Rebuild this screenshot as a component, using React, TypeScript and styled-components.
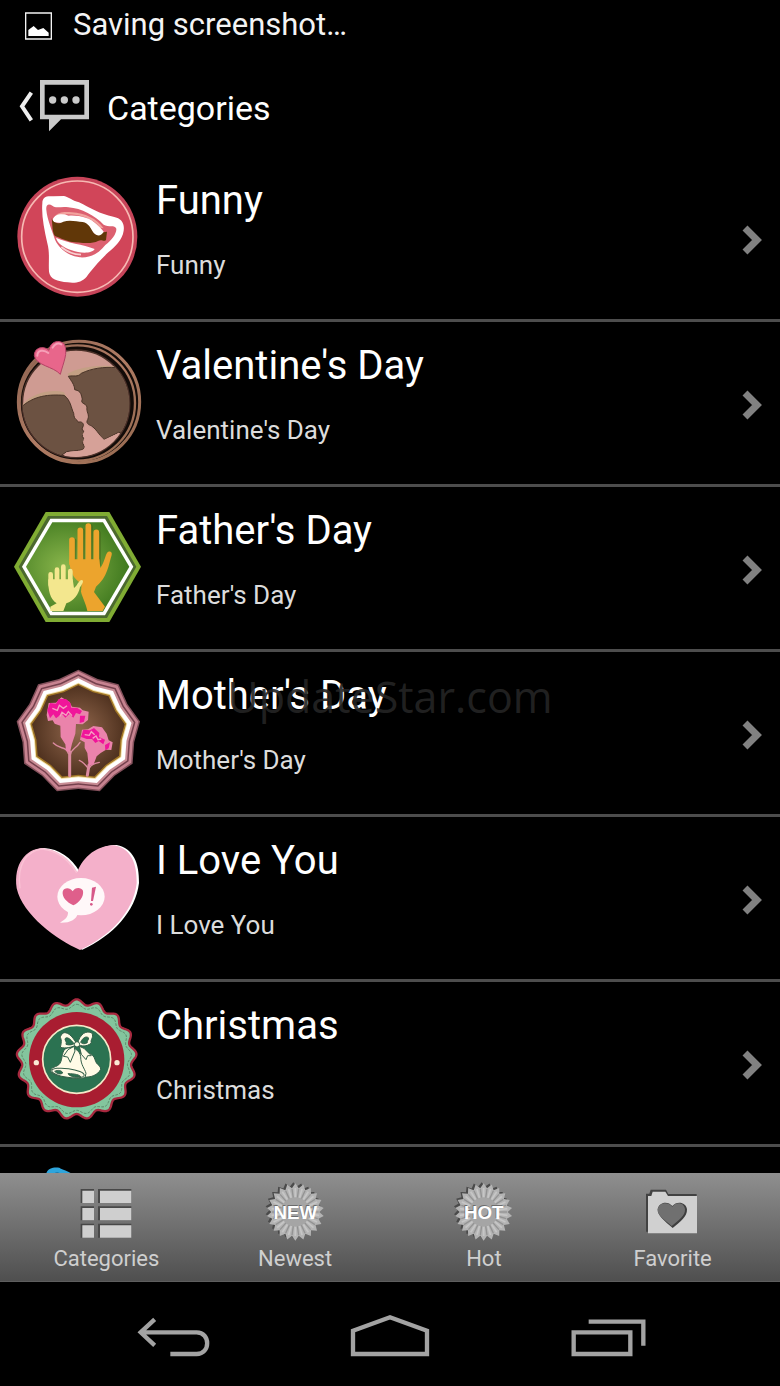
import React from 'react';
import styled, { createGlobalStyle } from 'styled-components';

const GlobalStyle = createGlobalStyle`
  *, *::before, *::after { box-sizing: border-box; }
  body { margin: 0; background: #000; }
  button { font: inherit; color: inherit; background: none; border: 0; padding: 0; cursor: pointer; }
  h1, h2, p, ul { margin: 0; padding: 0; font-weight: 400; }
  ul { list-style: none; }
  svg { display: block; flex: none; }
`;

const Screen = styled.div`
  position: relative;
  display: flex;
  flex-direction: column;
  height: 100vh;
  overflow: hidden;
  background: #000;
  color: #fff;
  font-family: Roboto, 'Liberation Sans', sans-serif;
`;

const StatusBar = styled.div`
  display: flex;
  flex: none;
  align-items: center;
  gap: 17px;
  height: 50px;
  padding: 0 24px;
  font-size: 31px;
  line-height: 40px;
  color: #f4f4f4;
`;

const ActionBar = styled.header`
  display: flex;
  flex: none;
  align-items: center;
  gap: 17px;
  height: 107px;
  padding: 8px 18px 0;
`;

const ScreenTitle = styled.h1`
  font-size: 34px;
  line-height: 44px;
`;

const CategoryList = styled.ul`
  flex: 1;
  min-height: 0;
  overflow: hidden;
`;

const CategoryRow = styled.li`
  height: 165px;
  border-bottom: 3px solid #4d4d4d;
`;

const CategoryLink = styled.a`
  display: flex;
  align-items: center;
  height: 100%;
  padding: 0 16px 0 12px;
  color: inherit;
  text-decoration: none;
`;

const CategoryText = styled.div`
  display: flex;
  flex: 1;
  flex-direction: column;
  align-self: flex-start;
  gap: 24px;
  min-width: 0;
  padding: 20px 0 0 12px;
`;

const CategoryName = styled.h2`
  font-size: 40px;
  line-height: 48px;
`;

const CategoryNote = styled.p`
  font-size: 26px;
  line-height: 32px;
  color: #dcdcdc;
`;

const TabBar = styled.nav`
  display: grid;
  flex: none;
  grid-template-columns: repeat(4, 1fr);
  padding: 0 13px 0 12px;
  background: linear-gradient(#8f8f8f, #4f4f4f);
  border-bottom: 1px solid #5e5e5e;
`;

const Tab = styled.button`
  display: flex;
  flex-direction: column;
  align-items: center;
  padding: 8px 0;
  font-size: 22px;
  line-height: 28px;
  color: #cfcfcf;
`;

const SystemBar = styled.nav`
  display: grid;
  flex: none;
  grid-template-columns: repeat(3, 1fr);
  height: 104px;
  padding: 0 64px;
`;

const SystemButton = styled.button`
  display: flex;
  align-items: center;
  justify-content: center;
`;

const Watermark = styled.div`
  position: absolute;
  inset: 0;
  display: flex;
  align-items: center;
  justify-content: center;
  padding-top: 8px;
  font-family: 'Open Sans', 'Noto Sans', sans-serif;
  font-size: 43px;
  line-height: 60px;
  color: rgba(36, 36, 36, 0.92);
  pointer-events: none;
`;

/* Radial outline with n tips, alternating between two radii. */
const starPoints = (cx: number, cy: number, outer: number, inner: number, n: number) =>
  Array.from({ length: n * 2 }, (_, i) => {
    const a = (Math.PI * i) / n - Math.PI / 2;
    const r = i % 2 ? inner : outer;
    return `${(cx + r * Math.cos(a)).toFixed(1)},${(cy + r * Math.sin(a)).toFixed(1)}`;
  }).join(' ');

/* Smooth scalloped ring with n bumps. */
const wavePoints = (cx: number, cy: number, r: number, depth: number, n: number) =>
  Array.from({ length: 360 }, (_, i) => {
    const t = (Math.PI * i) / 180;
    const d = r + depth * Math.cos(n * t);
    return `${(cx + d * Math.sin(t)).toFixed(1)},${(cy - d * Math.cos(t)).toFixed(1)}`;
  }).join(' ');

type ArtProps = { viewBox?: string; children: React.ReactNode };
const Art = ({ viewBox = '36 36 396 396', children }: ArtProps) => (
  <svg width="132" height="132" viewBox={viewBox} aria-hidden="true">{children}</svg>
);

const FunnyArt = () => (
  <Art viewBox="36 21 396 396">
    <circle cx="232" cy="215" r="180" fill="#c74459" />
    <circle cx="232" cy="215" r="167" fill="#d14559" stroke="#f7b9b3" strokeWidth="5" />
    <path fill="#fff" d="M127 115C127 95 140 92 160 94L192 93C207 96 215 106 237 112C270 128 300 148 340 155C366 160 374 176 371 197C367 225 345 245 325 262C300 285 272 318 260 335C246 352 225 355 203 352C172 348 150 343 147 320C145 290 150 265 142 235C132 190 124 150 127 115Z" />
    <path fill="#dc6070" d="M139 135C137 117 147 115 157 122C168 132 184 123 205 127C245 130 285 152 311 179C325 188 345 178 349 191C350 206 335 225 316 240C298 264 272 279 240 277C208 273 177 252 165 224C154 190 142 165 139 135Z" />
    <path fill="#f2a39e" d="M163 158C172 140 195 140 215 142C255 145 290 160 311 190L300 188C280 160 240 148 200 148Z" />
    <path fill="#fff" d="M158 164C164 148 184 144 206 152C238 150 270 158 290 178C302 190 318 202 312 212C300 220 285 212 270 192C240 172 210 176 160 172Z" />
    <path fill="#613708" d="M155 160C161 176 174 178 190 170C207 164 230 169 248 171C266 174 272 190 281 204C290 214 304 214 310 202L321 200L318 225C311 232 306 222 294 228C276 238 240 233 211 230C193 224 174 217 164 212C156 200 158 180 155 160Z" />
    <path fill="#fff" d="M168 218C200 234 250 238 284 252C275 267 240 265 215 256C190 247 172 235 168 218Z" />
    <path fill="none" stroke="#f8cfd0" strokeWidth="5" d="M184 246Q210 268 243 269" />
  </Art>
);

const ValentineArt = () => (
  <Art>
    <defs>
      <clipPath id="coin"><circle cx="228" cy="236" r="160" /></clipPath>
      <linearGradient id="rim" x1="0" y1="0" x2="1" y2="1">
        <stop offset="0" stopColor="#8c6250" /><stop offset=".5" stopColor="#b07c64" /><stop offset="1" stopColor="#93684e" />
      </linearGradient>
    </defs>
    <circle cx="237" cy="231" r="182" fill="#120b08" stroke="url(#rim)" strokeWidth="9" />
    <circle cx="232" cy="234" r="173" fill="none" stroke="url(#rim)" strokeWidth="7" />
    <circle cx="228" cy="236" r="161" fill="#cf9b92" stroke="#4a3028" strokeWidth="5" />
    <g clipPath="url(#coin)">
      <path fill="#c3a084" d="M202 146C240 126 300 117 350 125L345 150L210 160ZM66 240C100 200 160 192 192 202L200 216L70 250Z" />
      <path fill="#6c5242" stroke="#493428" strokeWidth="3" d="M205 154C222 150 232 158 244 145C275 130 310 125 350 128L410 180L400 330L356 322L312 344C300 336 295 318 275 303C264 298 257 294 263 284C270 268 258 262 261 246C256 232 240 238 247 222C243 212 246 198 224 194C224 180 214 168 205 154Z" />
      <path fill="#6c5242" stroke="#493428" strokeWidth="3" d="M60 250C100 210 150 208 192 211C212 225 213 248 221 265C222 286 232 282 235 292C242 288 252 294 250 302L246 312L253 322L247 334L254 344L248 354L254 366C250 380 228 374 200 380L180 394L120 400L50 340Z" />
      <path fill="#d6a198" d="M255 296L286 318L312 344L356 324L378 332C340 380 290 400 190 396L200 382C235 376 254 382 254 364L249 350L253 340L248 328L254 318Z" />
    </g>
    <path fill="#e8668b" stroke="#b34365" strokeWidth="3" d="M181 148C160 124 108 122 103 92C102 68 130 60 147 76C150 48 180 42 193 58C205 84 190 112 181 148Z" />
    <path fill="none" stroke="#f6a0b8" strokeWidth="6" strokeLinecap="round" d="M112 92C112 76 130 72 145 84M158 68C164 56 176 52 184 58" />
  </Art>
);

const FatherArt = () => (
  <Art>
    <defs>
      <radialGradient id="leaf" cx=".38" cy=".5" r=".6">
        <stop offset="0" stopColor="#8ab64c" /><stop offset="1" stopColor="#427b20" />
      </radialGradient>
    </defs>
    <path fill="#80ac33" d="M42 230L137 66H328L423 230L328 396H137Z" />
    <path fill="#4b692e" d="M56 230L144 78H321L409 230L321 384H144Z" />
    <path fill="#fff" d="M66 230L151 86H315L400 230L315 376H151Z" />
    <path fill="url(#leaf)" d="M78 230L157 97H309L388 230L309 365H157Z" />
    <g fill="#44661c" stroke="#44661c" opacity=".6" transform="translate(5 3)">
      <path d="M216 220V150M241 220V121M265 220V108M289 220V127" strokeWidth="17" strokeLinecap="round" />
    </g>
    <path d="M216 220V150M241 220V121M265 220V108M289 220V127" stroke="#eca42d" strokeWidth="17" strokeLinecap="round" />
    <path fill="#eca42d" d="M208 208L298 208L301 234C314 215 315 198 321 189C327 181 338 184 335 195C326 225 322 262 288 290L282 306L315 350L308 363H262C258 340 246 320 243 305L245 280C220 270 208 240 208 208Z" />
    <path d="M152 285V253M171 285V239M190 285V230M211 285V243" stroke="#f3e78e" strokeWidth="14" strokeLinecap="round" />
    <path fill="#f3e78e" d="M145 268L218 268L222 294C232 288 235 271 246 270C254 274 244 285 240 292C236 312 222 334 199 340L190 363H151V350L170 340C150 328 144 300 145 268Z" />
  </Art>
);

const MotherArt = () => (
  <Art>
    <defs>
      <radialGradient id="cocoa"><stop offset="0" stopColor="#94694f" /><stop offset="1" stopColor="#50321f" /></radialGradient>
    </defs>
    {[[188, '#83505b'], [183, '#c78390'], [174, '#75404d'], [169, '#c88c94'], [162, '#fff'], [149, '#f2dfa4'], [146, '#a17625'], [141, 'url(#cocoa)']].map(([r, fill]) => (
      <polygon key={r} points={starPoints(235, 232, Number(r), Number(r) * 0.905, 9)} fill={String(fill)} />
    ))}
    <g fill="none" stroke="#dc8aa0" strokeLinecap="round">
      <path strokeWidth="9" d="M209 362V290M262 361L267 330" />
      <path strokeWidth="4" d="M160 264C180 285 198 272 205 296M240 262C228 282 214 280 211 300M238 316C252 322 256 330 263 338M298 322C282 326 274 328 267 340" />
    </g>
    <path fill="#ea83ab" d="M140 180L146 144L168 143L184 127L208 140L216 155L240 158L248 166L266 170L264 195L248 208L228 207L226 236L216 266L210 292L198 288L196 268L182 246L181 212L164 206L158 196L144 198Z" />
    <path fill="#f0159a" d="M142 166L150 144L168 146L176 132L198 132L212 145L213 158L232 159L246 168L240 178L228 174L220 188L208 177L196 188L186 176L168 190L160 178L150 190ZM240 182L256 182L252 200L239 204Z" />
    <path fill="none" stroke="#f5a0c0" strokeWidth="4" d="M157 160L172 166L178 151L190 160L201 152M180 184L186 172L198 181L205 170L216 182" />
    <path fill="#ea83ab" d="M240 254L246 224L264 223L280 213L306 217L320 236L326 256L338 262L334 285L318 284L302 294L290 304L281 328L266 332L262 294L254 279L254 262Z" />
    <path fill="#f0159a" d="M243 246L250 224L270 226L282 219L298 234L297 246L315 254L310 268L296 258L286 264L276 252L260 252L250 248ZM315 270L330 262L326 280L316 286Z" />
    <path fill="none" stroke="#f5a0c0" strokeWidth="4" d="M254 239L268 241L274 230L284 239M278 250L288 243L294 254L304 252" />
  </Art>
);

const heartOutline = 'M240 390C170 360 68 285 50 205C40 132 78 87 125 85C170 87 208 115 232 156C250 108 293 76 343 76C393 86 411 130 410 190C400 275 332 348 240 390Z';

const LoveArt = () => (
  <Art>
    <path fill="#fff" d={heartOutline} transform="translate(7 -1)" />
    <path fill="#f4b0ca" d={heartOutline} />
    <path fill="none" stroke="#fac3d5" strokeWidth="4" d="M60 205C50 132 80 94 125 87C170 90 204 118 230 158" />
    <ellipse cx="243" cy="230" rx="71" ry="56" fill="#fff8f9" />
    <path fill="#fff8f9" d="M202 268C209 288 197 298 180 308C210 309 230 299 234 278Z" />
    <path fill="#df5f8b" d="M220 256C200 246 186 232 188 215C192 202 210 202 218 214C224 202 243 200 249 212C252 230 238 247 220 256Z" />
    <path fill="#d75888" d="M276 203L288 200L279 243H273Z" />
    <circle cx="274" cy="253" r="4" fill="#d75888" />
  </Art>
);

const ChristmasArt = () => (
  <Art>
    <polygon points={wavePoints(230, 223, 172, 8, 17)} fill="#83c59d" stroke="#a8293f" strokeWidth="7" strokeLinejoin="round" />
    <polygon points={wavePoints(230, 223, 159, 6, 17)} fill="none" stroke="#5b8768" strokeWidth="3" strokeDasharray="8 4" />
    <circle cx="230" cy="224" r="143" fill="#a91d31" />
    <circle cx="230" cy="223" r="102" fill="#2b7251" stroke="#f6e9c9" strokeWidth="5" />
    <circle cx="109" cy="233" r="8" fill="#fbe9d5" />
    <circle cx="351" cy="233" r="8" fill="#fbe9d5" />
    <g fill="#fffbe6" stroke="#335f49" strokeWidth="3" strokeLinejoin="round">
      <path d="M240 205C260 198 280 205 285 224C290 242 302 240 302 253C294 270 272 278 252 276L235 250Z" />
      <path d="M195 192C215 180 240 195 242 215C242 240 254 250 258 265L255 278C225 284 170 276 153 262C148 245 172 248 180 235C188 222 184 205 195 192Z" />
      <ellipse cx="204" cy="264" rx="49" ry="13" transform="rotate(8 204 264)" />
      <path fill="#2b7251" d="M164 259C174 254 186 256 188 264C182 269 171 267 164 259ZM204 266C225 266 240 270 242 275C226 278 208 274 204 266Z" />
      <path d="M222 184L204 194L190 214L203 216L211 232L225 198ZM238 184L252 190L274 212L263 212L258 224L244 208Z" />
      <path d="M231 178C212 142 191 136 184 150C175 162 190 154 181 187C196 191 216 188 231 178ZM232 178C240 144 260 136 276 144C282 160 270 162 274 174C260 186 244 184 232 178Z" />
      <path fill="#2b7251" d="M222 176C210 160 202 156 196 160C192 167 202 168 198 178C206 181 216 180 222 176ZM242 172C248 158 258 153 265 158C268 164 260 166 262 173C254 178 248 177 242 172Z" />
      <circle cx="231" cy="178" r="8" />
    </g>
  </Art>
);

const NextArt = () => (
  <Art viewBox="36 531 396 396">
    <path fill="#2ea5dc" d="M138 572C138 550 160 545 178 548C188 556 200 554 220 570C250 600 255 680 230 730C190 770 140 730 120 680C112 640 120 600 138 572Z" />
    <path fill="#1b6f9f" d="M158 568Q172 556 184 568Z" />
  </Art>
);

const Chevron = () => (
  <svg width="24" height="36" viewBox="0 0 24 36" aria-hidden="true">
    <path d="M5 8L17 20L5 32" fill="none" stroke="#818181" strokeWidth="7" />
  </svg>
);

type BadgeProps = { label: string; viewBox: string; cx: number };
const Badge = ({ label, viewBox, cx }: BadgeProps) => (
  <svg width="64" height="64" viewBox={viewBox} aria-hidden="true">
    <polygon points={starPoints(cx - 6, 151, 84, 72, 22)} fill="#4a4a4a" />
    <polygon points={starPoints(cx, 156, 86, 72, 22)} fill="#b4b4b4" />
    {Array.from({ length: 22 }, (_, i) => (
      <path key={i} d={`M${cx} 116V86`} stroke="#939393" strokeWidth="4" transform={`rotate(${((i + 0.5) * 360) / 22} ${cx} 156)`} />
    ))}
    {Array.from({ length: 22 }, (_, i) => (
      <path key={i} d={`M${cx} 116V84`} stroke="#c6c6c6" strokeWidth="5" transform={`rotate(${(i * 360) / 22} ${cx} 156)`} />
    ))}
    <circle cx={cx} cy="156" r="44" fill="#a5a5a5" />
    <g fontFamily="Liberation Sans, Arial, sans-serif" fontSize="56" fontWeight="700" textAnchor="middle">
      <text x={cx - 2} y="174" fill="#6b6b6b">{label}</text>
      <text x={cx} y="178" fill="#fff">{label}</text>
    </g>
  </svg>
);

const GridIcon = () => (
  <svg width="64" height="64" viewBox="223 63 192 192" aria-hidden="true">
    {[91, 143, 195].map((y) => (
      <g key={y}>
        <path fill="#484848" d={`M243 ${y - 4}H283V${y + 38}H243ZM295 ${y - 4}H395V${y + 38}H295Z`} />
        <path fill="#cfcfcf" d={`M248 ${y + 1}H283V${y + 38}H248ZM301 ${y + 1}H395V${y + 38}H301Z`} />
      </g>
    ))}
  </svg>
);

const FolderIcon = () => (
  <svg width="64" height="64" viewBox="754 63 192 192" aria-hidden="true">
    <path fill="#424242" d="M769 215V101H779L783 89H829L836 102H921V215Z" />
    <path fill="#d0d0d0" d="M775 220V108H785L789 95H827L835 108H922V220Z" />
    <path fill="#3e3e3e" d="M849 204C826 184 803 168 804 148C808 125 835 122 848 138C861 122 889 125 892 148C893 170 872 186 849 204Z" />
    <path fill="#707070" d="M846 198C826 180 803 168 804 148C808 127 835 124 848 140C860 124 884 127 886 148C887 168 866 182 846 198Z" />
  </svg>
);

const categories = [
  { name: "Funny", art: <FunnyArt /> },
  { name: "Valentine's Day", art: <ValentineArt /> },
  { name: "Father's Day", art: <FatherArt /> },
  { name: "Mother's Day", art: <MotherArt /> },
  { name: "I Love You", art: <LoveArt /> },
  { name: "Christmas", art: <ChristmasArt /> },
];

const tabs = [
  { label: 'Categories', icon: <GridIcon /> },
  { label: 'Newest', icon: <Badge label="NEW" viewBox="790 63 192 192" cx={887} /> },
  { label: 'Hot', icon: <Badge label="HOT" viewBox="186 63 192 192" cx={281} /> },
  { label: 'Favorite', icon: <FolderIcon /> },
];

const systemKeys = [
  { label: 'Back', viewBox: '373 430 288 180', d: 'M462 476L420 515L462 554M420 515H588C630 515 630 580 588 580H509' },
  { label: 'Home', viewBox: '1026 430 288 180', d: 'M1059 510L1170 470L1281 510V580H1059Z' },
  { label: 'Recent apps', viewBox: '508 430 288 180', d: 'M552 515H722V580H552ZM597 483H761V555' },
];

export default function App() {
  return (
    <Screen>
      <GlobalStyle />
      <StatusBar>
        <svg width="32" height="32" viewBox="72 27 96 96" aria-hidden="true">
          <path fill="none" stroke="#f4f4f4" strokeWidth="4" d="M77 39H154V117H77Z" />
          <path fill="#fff" d="M85 108V90L101 78L114 90L130 84L146 98V108Z" />
        </svg>
        <span>Saving screenshot…</span>
      </StatusBar>
      <ActionBar>
        <button type="button" aria-label="Navigate up">
          <svg width="72" height="60" viewBox="54 233 216 180" aria-hidden="true">
            <path fill="none" stroke="#eee" strokeWidth="12" d="M94 277L66 318L94 360" />
            <path fill="#cacaca" fillRule="evenodd" d="M120 239H267V357H183L147 393V357H120ZM134 253V343H253V253Z" />
            <g fill="#cacaca"><circle cx="158" cy="299" r="11" /><circle cx="193" cy="299" r="11" /><circle cx="228" cy="299" r="11" /></g>
          </svg>
        </button>
        <ScreenTitle>Categories</ScreenTitle>
      </ActionBar>
      <CategoryList>
        {categories.map(({ name, art }) => (
          <CategoryRow key={name}>
            <CategoryLink href="#">
              {art}
              <CategoryText>
                <CategoryName>{name}</CategoryName>
                <CategoryNote>{name}</CategoryNote>
              </CategoryText>
              <Chevron />
            </CategoryLink>
          </CategoryRow>
        ))}
        <CategoryRow>
          <CategoryLink as="div"><NextArt /></CategoryLink>
        </CategoryRow>
      </CategoryList>
      <TabBar>
        {tabs.map(({ label, icon }) => (
          <Tab key={label} type="button">{icon}<span>{label}</span></Tab>
        ))}
      </TabBar>
      <SystemBar>
        {systemKeys.map(({ label, viewBox, d }) => (
          <SystemButton key={label} type="button" aria-label={label}>
            <svg width="96" height="60" viewBox={viewBox} aria-hidden="true">
              <path fill="none" stroke="#a3a3a3" strokeWidth="13" d={d} />
            </svg>
          </SystemButton>
        ))}
      </SystemBar>
      <Watermark>UpdateStar.com</Watermark>
    </Screen>
  );
}
